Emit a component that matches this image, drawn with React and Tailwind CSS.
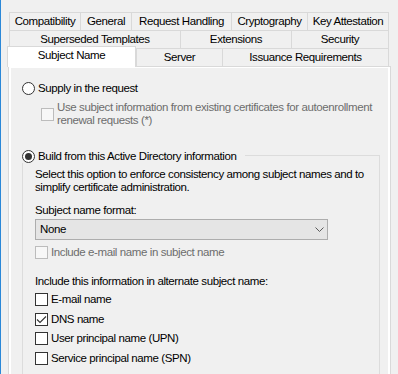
import clsx from "clsx";

const tabRows = [
  [
    { label: "Compatibility", w: "w-[71px]" },
    { label: "General", w: "w-[51px]" },
    { label: "Request Handling", w: "w-[100px]" },
    { label: "Cryptography", w: "w-[76px]" },
    { label: "Key Attestation", w: "w-[82px]" },
  ],
  [
    { label: "Superseded Templates", w: "w-[171px]" },
    { label: "Extensions", w: "w-[111px]" },
    { label: "Security", w: "w-[98px]" },
  ],
];

const altNames = [
  { label: "E-mail name", checked: false },
  { label: "DNS name", checked: true },
  { label: "User principal name (UPN)", checked: false },
  { label: "Service principal name (SPN)", checked: false },
];

function Tab({ label, w, last }) {
  return (
    <div
      className={clsx(
        "flex h-full items-center justify-center whitespace-nowrap border-l border-t border-[#d9d9d9]",
        w,
        last && "border-r"
      )}
    >
      {label}
    </div>
  );
}

function Radio({ checked }) {
  return (
    <span className="flex h-[13px] w-[13px] shrink-0 items-center justify-center rounded-full border border-[#333333] bg-white">
      {checked && <span className="h-[7px] w-[7px] rounded-full bg-[#333333]" />}
    </span>
  );
}

function Checkbox({ checked, disabled }) {
  return (
    <span
      className={clsx(
        "flex h-[13px] w-[13px] shrink-0 border",
        disabled ? "border-[#bcbcbc] bg-[#f7f7f7]" : "border-[#333333] bg-white"
      )}
    >
      {checked && (
        <svg width="11" height="11" viewBox="0 0 11 11" fill="none">
          <path d="M1 5.5 L4 8.5 L10 2.5" stroke="#333333" strokeWidth="1.1" />
        </svg>
      )}
    </span>
  );
}

export default function App() {
  return (
    <div className="h-[374px] w-[398px] overflow-hidden border-l border-[#2b88d8] bg-[#f0f0f0] font-['Liberation_Sans',Arial,sans-serif] text-[11.5px] leading-[13px] tracking-[-0.4px] text-black">
      <div className="pl-[8px] pt-[12px]">
        {tabRows.map((row, i) => (
          <div key={i} className="flex h-[18px] w-[380px]">
            {row.map((t, j) => (
              <Tab key={t.label} label={t.label} w={t.w} last={j === row.length - 1} />
            ))}
          </div>
        ))}
        <div className="flex h-[18px] w-[380px]">
          <div className="relative z-10 -ml-[2px] -mt-[2px] flex h-[21px] w-[129px] justify-center whitespace-nowrap border-x border-t border-[#d9d9d9] bg-white pt-[2px]">
            Subject Name
          </div>
          <Tab label="Server" w="w-[86px]" />
          <Tab label="Issuance Requirements" w="w-[167px]" last />
        </div>

        <div className="-ml-[1px] h-[308px] w-[383px] border-x border-t border-[#d9d9d9] bg-white px-[2px] pt-[1px]">
          <div className="h-full bg-[#f0f0f0] pl-[11px] pt-[14px]">
            <div className="flex items-center gap-[3px]">
              <Radio />
              <span>Supply in the request</span>
            </div>
            <div className="ml-[19px] mt-[6px] flex items-center gap-[3px] text-[#6d6d6d]">
              <Checkbox disabled />
              <span className="whitespace-nowrap">
                Use subject information from existing certificates for autoenrollment
                <br />
                renewal requests (*)
              </span>
            </div>

            <div className="mt-[23px] w-[358px]">
              <div className="flex h-[13px] items-center">
                <Radio checked />
                <span className="ml-[3px] whitespace-nowrap pr-[9px]">
                  Build from this Active Directory information
                </span>
                <div className="h-[8px] flex-1 self-end border-r border-t border-[#dcdcdc]" />
              </div>
              <div className="border-x border-[#dcdcdc] pb-[16px] pl-[12px] pt-[4.5px]">
                <p className="whitespace-nowrap">
                  Select this option to enforce consistency among subject names and to
                  <br />
                  simplify certificate administration.
                </p>
                <p className="mt-[10.5px]">Subject name format:</p>
                <div className="mt-[2px] flex h-[21px] w-[293px] items-center justify-between border border-[#adadad] bg-[#e5e5e5] pl-[4px] pr-[3px]">
                  <span>None</span>
                  <svg width="9" height="5" viewBox="0 0 9 5" fill="none">
                    <path d="M0.5 0.5 L4.5 4.5 L8.5 0.5" stroke="#5a5a5a" strokeWidth="1" />
                  </svg>
                </div>
                <div className="mt-[6px] flex items-center gap-[3px] text-[#6d6d6d]">
                  <Checkbox disabled />
                  <span>Include e-mail name in subject name</span>
                </div>
                <p className="mt-[15.5px]">Include this information in alternate subject name:</p>
                <div className="mt-[5.5px] flex flex-col gap-[6.5px]">
                  {altNames.map((n) => (
                    <div key={n.label} className="flex items-center gap-[3px]">
                      <Checkbox checked={n.checked} />
                      <span>{n.label}</span>
                    </div>
                  ))}
                </div>
              </div>
            </div>
          </div>
        </div>
      </div>
    </div>
  );
}
